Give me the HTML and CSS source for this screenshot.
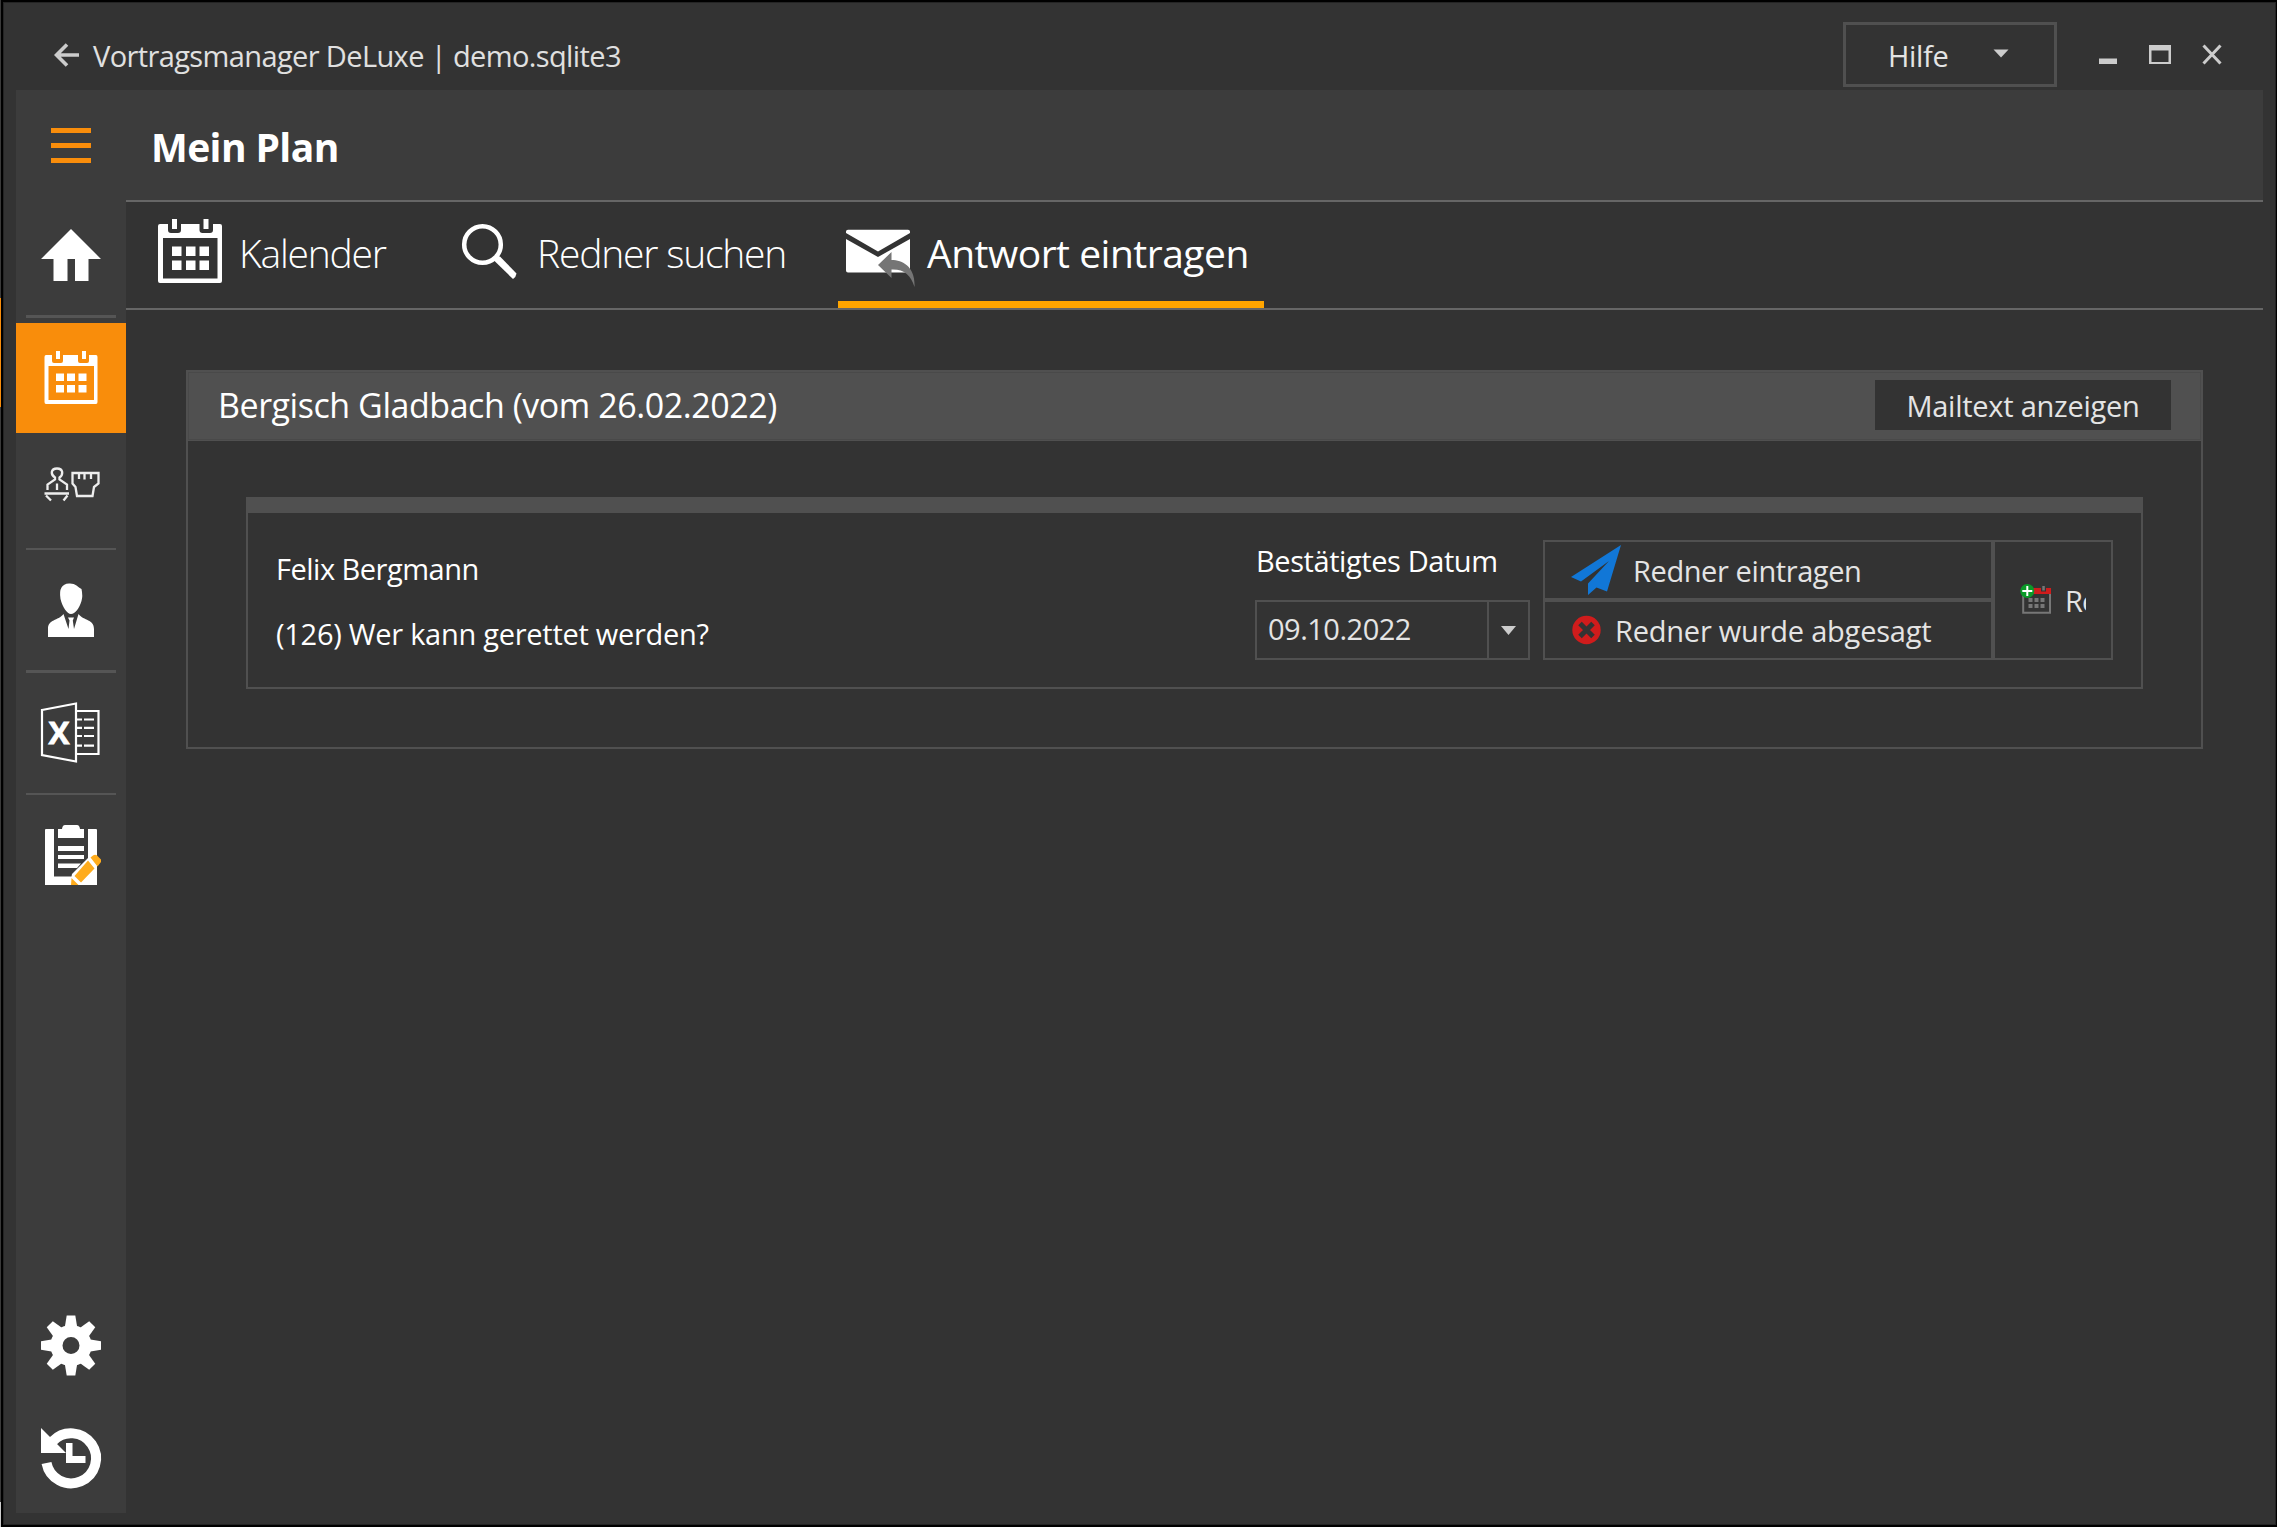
FILE: index.html
```html
<!DOCTYPE html>
<html lang="de">
<head>
<meta charset="utf-8">
<title>Vortragsmanager DeLuxe</title>
<link rel="stylesheet" href="styles.css">
</head>
<body>
<div class="window">
  <header class="titlebar">
    <svg class="back" viewBox="54 42 26 26"><path d="M79 55H57M67 44.500L56.500 55L67 65.500" fill="none" stroke="#ccc" stroke-width="3.600"/></svg>
    <span class="app-title">Vortragsmanager DeLuxe | demo.sqlite3</span>
    <button class="help"><span>Hilfe</span><svg width="16" height="9" viewBox="0 0 16 9"><path d="M.5.5H15.500L8 8.500Z" fill="#ccc"/></svg></button>
    <svg class="controls" viewBox="2098 44 124 22">
      <path d="M2099 58.500H2117V64H2099Z" fill="#ccc"/>
      <path fill-rule="evenodd" d="M2149 45H2171V64H2149ZM2151.500 50.500V62H2168.500V50.500Z" fill="#ccc"/>
      <path d="M2203.500 45.500L2220.500 63.500M2220.500 45.500L2203.500 63.500" stroke="#ccc" stroke-width="3"/>
    </svg>
  </header>
  <div class="shell">
    <nav class="sidebar">
      <svg class="menu" viewBox="16 90 110 110"><path d="M51 128h40v5H51zM51 143h40v5H51zM51 158h40v5H51z" fill="#f98d0b"/></svg>
      <svg class="home" viewBox="16 200 110 115"><path d="M71 229L101 259H88.500V281H75V259H67.500V281H53.500V259H41Z" fill="#fff"/></svg>
      <hr class="thick">
      <svg class="active" viewBox="16 323 110 110"><path fill="#fff" fill-rule="evenodd" d="M46 355H52V361Q52 363 54 363H61Q63 363 63 361V355H78V361Q78 363 80 363H87Q89 363 89 361V355H96Q97.500 355 97.500 357V402Q97.500 404 96 404H46Q44.500 404 44.500 402V357Q44.500 355 46 355ZM48.500 366V400H94V366ZM56 351h4v8h-4zM82 351h4v8h-4zM56 373.500h8v7.500h-8zM67 373.500h8v7.500h-8zM78.500 373.500h8v7.500h-8zM56 385h8v7.500h-8zM67 385h8v7.500h-8zM78.500 385h8v7.500h-8z"/></svg>
      <svg class="speaker" viewBox="16 433 110 115"><g fill="none" stroke="#eee" stroke-width="2.300"><path d="M47.500 490V484.500L55 479.500V477.500Q51.500 475.500 51.800 472Q52.500 468.500 57 468.500Q61.500 468.500 62.200 472Q62.500 475.500 59.500 477.500V479.500L67 484.500V490M57 483.500V490M44.500 493.500H69M46 495.500L51 500.500M67.500 495.500L63.500 500.500"/><path d="M72.500 473H98.500V483.500L94 487L92.500 496H77L75.500 487L72.500 483.500ZM79 473V479M84.500 473V479.500M91 473V479"/></g></svg>
      <hr>
      <svg class="person" viewBox="16 550 110 120"><path fill="#fff" d="M60.500 599Q58 584 69 583.500C75 583 78 587 81.500 589Q83 596 81.500 601C79.500 608 75 614 71 614C67 614 62.500 607 60.500 599ZM48 637V629C48 619 58 621 63.500 614L68.500 629L69.500 620.500L68 617.500H74L72.800 620.500L74 629L78.500 614C84 621 94 619 94 629V637Z"/></svg>
      <hr class="thick">
      <svg class="excel" viewBox="16 673 110 120"><path fill="none" stroke="#fff" stroke-width="2.200" d="M42 710L76 703.500V761.500L42 755ZM76 711H98.500V754H76M77 719.500H82M84 719.500H94M77 727.800H82M84 727.800H94M77 736H82M84 736H94M77 745.600H82M84 745.600H94"/><text x="59" y="743.500" class="xl" textLength="21" lengthAdjust="spacingAndGlyphs" text-anchor="middle">X</text></svg>
      <hr>
      <svg class="clip" viewBox="16 795 110 115"><path fill="#fff" d="M45 830Q45 829 46 829H54V876.500H76L88 865V829H96Q97 829 97 830V885H45ZM58 829H62Q62.500 825 65 825H77Q79.500 825 80 829H84V838H58ZM58 846H84V851H58ZM58 855H84V859H58ZM58 863.500H81L77 868H58Z"/><path fill="#fff" d="M88 858L97 868V885H70L72 874Z"/><path fill="#ffac1c" d="M90.500 857.500L93 855.500Q96 853.500 98.500 857L101 859.500V862L97.500 866.500ZM88 860.500L94.500 868.500L81 882.500L74.500 876ZM71.500 878L78.500 885H71Z"/></svg>
      <div class="grow"></div>
      <svg class="gear" viewBox="16 1290 110 110"><defs><path id="tooth" d="M66.700 1315.500H75.300L78 1332H64Z"/></defs><g fill="#fff"><use href="#tooth"/><use href="#tooth" transform="rotate(45 71 1345.500)"/><use href="#tooth" transform="rotate(90 71 1345.500)"/><use href="#tooth" transform="rotate(135 71 1345.500)"/><use href="#tooth" transform="rotate(180 71 1345.500)"/><use href="#tooth" transform="rotate(225 71 1345.500)"/><use href="#tooth" transform="rotate(270 71 1345.500)"/><use href="#tooth" transform="rotate(315 71 1345.500)"/></g><circle cx="71" cy="1345.500" r="14.500" fill="none" stroke="#fff" stroke-width="12"/></svg>
      <svg class="history" viewBox="16 1400 110 113"><path d="M46.500 1463A25 25 0 1 0 53 1441" fill="none" stroke="#fff" stroke-width="10"/><path d="M41 1428L66 1453H41ZM66 1443H72.500V1456H85.500V1463H66Z" fill="#fff"/></svg>
    </nav>
    <main class="main">
      <h1 class="heading">Mein Plan</h1>
      <div class="tabs">
        <div class="tab tab-cal"><svg viewBox="158 218 64 66"><path fill="#fff" fill-rule="evenodd" d="M160 224H168V230Q168 233 171 233H178Q181 233 181 230V224H199.500V230Q199.500 233 202.500 233H210Q213 233 213 230V224H220Q222 224 222 226V281Q222 283 220 283H160Q158 283 158 281V226Q158 224 160 224ZM163 238V278.500H217.500V238ZM172 219h5v10h-5zM203.500 219h5v10h-5zM172 246.500h9.500v9.500h-9.500zM186 246.500h9.500v9.500h-9.500zM199.500 246.500h9.500v9.500h-9.500zM172 260.500h9.500v9.500h-9.500zM186 260.500h9.500v9.500h-9.500zM199.500 260.500h9.500v9.500h-9.500z"/></svg><span>Kalender</span></div>
        <div class="tab tab-search"><svg viewBox="460 222 60 60"><circle cx="482.500" cy="244.500" r="18.300" fill="none" stroke="#fff" stroke-width="4.500"/><path d="M495 256.500L500 256.500L516.500 273.500Q516 277 513 279L494 260.500Z" fill="#fff"/></svg><span>Redner suchen</span></div>
        <div class="tab tab-answer"><svg viewBox="846 222 70 66"><path fill="#fff" d="M848 229.700H908Q910 229.700 910 231.500V233L878 251.500L846 233V231.500Q846 229.700 848 229.700ZM846 239L878 257L910 239V270.500Q910 272.500 908 272.500H848Q846 272.500 846 270.500Z"/><path fill="#757575" d="M878 265L891.500 252V260C903 260 915.500 267 914.500 287C911 275 904 269 891.500 269.500V278Z"/></svg><span>Antwort eintragen</span></div>
      </div>
      <section class="group">
        <div class="group-head"><span class="group-title">Bergisch Gladbach (vom 26.02.2022)</span><button class="mail">Mailtext anzeigen</button></div>
        <div class="card">
          <div class="card-bar"></div>
          <div class="card-body">
            <div class="speaker-info"><span class="name">Felix Bergmann</span><span class="talk">(126) Wer kann gerettet werden?</span></div>
            <div class="date"><label>Bestätigtes Datum</label>
              <div class="date-box"><span class="date-val">09.10.2022</span><span class="date-arrow"><svg width="15" height="9" viewBox="0 0 15 9"><path d="M0 0H15L7.500 9Z" fill="#ccc"/></svg></span></div></div>
            <div class="actions">
              <button class="act enter"><svg viewBox="1570 544 52 52"><path fill="#1177d7" d="M1621 545L1571 577L1581 581.500L1609 561L1588 583.500V595L1596.500 587.500L1607 591.500Z"/></svg><span>Redner eintragen</span></button>
              <button class="act cancel"><svg viewBox="1572 615 30 30"><circle cx="1586.500" cy="630" r="14.200" fill="#d01c1c"/><path d="M1580 623.500L1593 636.500M1593 623.500L1580 636.500" stroke="#333" stroke-width="5"/></svg><span>Redner wurde abgesagt</span></button>
              <button class="act move"><svg viewBox="2020 584 32 32"><path d="M2023.200 593V612.800H2050V593" fill="none" stroke="#777" stroke-width="2"/><path d="M2030 588H2051V594H2030Z" fill="#d01c1c"/><path d="M2041 586H2046V591.500H2041Z" fill="#333"/><path fill="#777" d="M2042.300 586h2.500v4.500h-2.500zM2028.500 598h4v4h-4zM2034.500 598h4v4h-4zM2040.500 598h4v4h-4zM2028.500 604h4v4h-4zM2034.500 604h4v4h-4zM2040.500 604h4v4h-4z"/><circle cx="2027.300" cy="591" r="7" fill="#0a9a28"/><path d="M2027.300 586V596M2022.300 591H2032.300" stroke="#fff" stroke-width="2"/></svg><span class="cut">Re</span></button>
            </div>
          </div>
        </div>
      </section>
    </main>
  </div>
</div>
</body>
</html>
```
FILE: styles.css
```css
* { box-sizing: border-box; }
body {
  margin: 0; width: 2277px; height: 1527px; padding: 2px 1px 2px 3px; overflow: hidden;
  background: linear-gradient(#3a3a3a 298px, #f98d0b 298px 407px, #3a3a3a 407px 1502px, #ccc 1502px) 0 0 / 1px 100% no-repeat #000;
  font: 29px/40px "Open Sans", "Noto Sans", sans-serif; color: #fff; white-space: nowrap;
}
svg { display: block; flex: none; }
button { font: inherit; color: #e4e4e4; background: #333; margin: 0; padding: 0; display: flex; align-items: center; }

.window { height: 1523px; background: #333; border: 1px solid #242424; padding: 0 12px 11px; display: flex; flex-direction: column; }
.titlebar { height: 87px; display: flex; align-items: flex-start; color: #e0e0e0; }
.back { width: 26px; height: 26px; margin: 39px 0 0 38px; }
.app-title { margin: 33px 0 0 13px; letter-spacing: -.62px; }
.help { width: 214px; height: 65px; margin: 19px 41px 0 auto; border: 3px solid #505050; padding: 2px 45px 0 42px; justify-content: space-between; letter-spacing: -.3px; }
.help svg { margin-top: -5px; }
.controls { width: 124px; height: 22px; margin: 41px 41px 0 0; }

.shell { display: flex; flex: 1; min-height: 0; }
.sidebar { width: 110px; background: #3c3c3c; display: flex; flex-direction: column; }
.sidebar svg { width: 110px; }
.sidebar hr { margin: 0 10px; border: 0; height: 2px; background: #555; flex: none; }
.sidebar hr.thick { height: 3px; }
.menu, .active, .gear { height: 110px; }
.home, .speaker, .clip { height: 115px; }
.active { background: #f98d0b; margin-top: 5px; }
.person, .excel { height: 120px; }
.history { height: 113px; }
.grow { flex: 1; }
.xl { font: bold 31px "Open Sans", sans-serif; fill: #fff; stroke: #fff; stroke-width: .8px; }

.main { flex: 1; min-width: 0; }
.heading { margin: 0; height: 110px; background: #3c3c3c; font-size: 39px; line-height: 56px; font-weight: 700; padding: 29px 0 0 25px; letter-spacing: -.6px; }
.tabs { height: 110px; border: solid #666; border-width: 2px 0; display: flex; font-size: 39px; line-height: 56px; font-weight: 300; }
.tab { display: flex; align-items: flex-start; height: 106px; }
.tab span { margin-top: 23px; }
.tab-cal { width: 305px; padding-left: 32px; letter-spacing: -1.2px; }
.tab-cal svg { width: 64px; height: 66px; margin: 16px 17px 0 0; }
.tab-search { width: 407px; padding-left: 29px; letter-spacing: -1.2px; }
.tab-search svg { width: 60px; height: 60px; margin: 20px 17px 0 0; }
.tab-answer { width: 426px; padding-left: 8px; border-bottom: 7px solid #ffa500; font-weight: 400; letter-spacing: -.5px; }
.tab-answer svg { width: 70px; height: 66px; margin: 20px 11px 0 0; }

.group { margin: 60px 60px 0; height: 379px; border: 2px solid #505050; }
.group-head { height: 68px; background: #505050; display: flex; justify-content: space-between; padding: 8px 30px 0 30px; box-shadow: inset 0 0 0 1px #494949, 0 1px #505050; }
.group-title { font-size: 34px; line-height: 46px; padding-top: 2px; letter-spacing: -.45px; }
.mail { width: 296px; height: 50px; border: 0; padding-top: 2px; justify-content: center; letter-spacing: -.25px; }
.card { margin: 57px 58px 0; height: 192px; border: 2px solid #505050; }
.card-bar { height: 14px; background: #505050; }
.card-body { display: flex; padding: 27px 28px 0; }
.speaker-info { flex: 1; display: flex; flex-direction: column; gap: 25px; padding-top: 9px; }
.name { letter-spacing: -.5px; }
.talk { letter-spacing: -.27px; }
.date { width: 288px; }
.date label { display: block; height: 60px; padding: 1px 0 0 1px; letter-spacing: -.42px; }
.date-box { width: 275px; height: 60px; border: 2px solid #505050; display: flex; color: #e4e4e4; }
.date-val { flex: 1; padding: 7px 0 0 11px; letter-spacing: -.5px; }
.date-arrow { width: 41px; border-left: 2px solid #505050; display: grid; place-items: center; }
.actions { display: grid; grid-template: 60px 60px / 450px 120px; }
.act { border: 2px solid #505050; }
.act span { padding-top: 2px; }
.enter { padding-left: 25px; gap: 11px; letter-spacing: -.4px; }
.enter svg { width: 52px; height: 52px; }
.cancel { padding-left: 27px; gap: 13px; letter-spacing: -.22px; }
.cancel svg { width: 30px; height: 30px; }
.move { grid-area: 1 / 2 / 3 / 3; padding-left: 25px; gap: 13px; letter-spacing: -1px; }
.move svg { width: 32px; height: 32px; }
.cut { width: 21px; overflow: hidden; text-align: left; }
```
